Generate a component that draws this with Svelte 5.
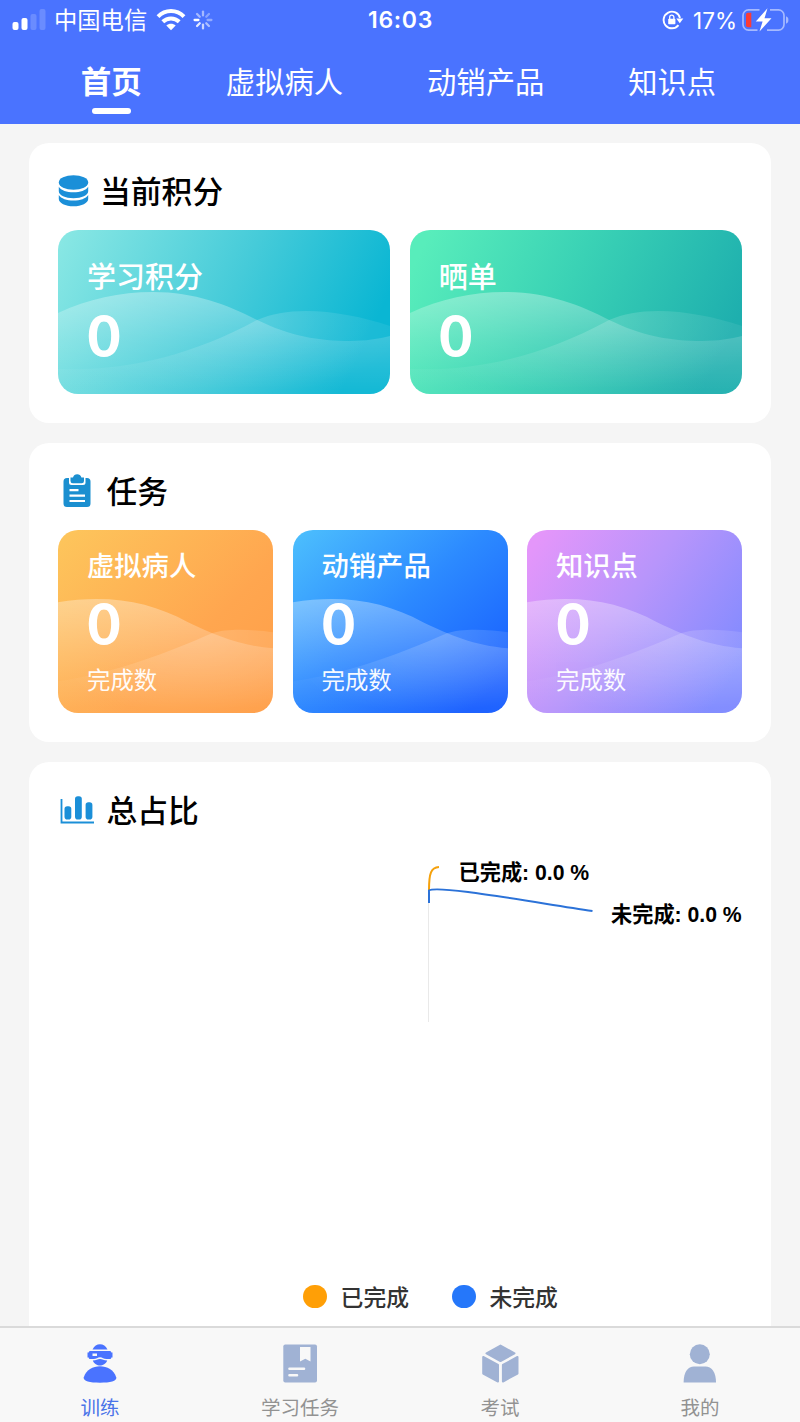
<script>
  const tabs = ['首页', '虚拟病人', '动销产品', '知识点'];
  const points = [
    { label: '学习积分', value: 0, tone: 'teal' },
    { label: '晒单', value: 0, tone: 'green' }
  ];
  const tasks = [
    { label: '虚拟病人', value: 0, tone: 'orange' },
    { label: '动销产品', value: 0, tone: 'blue' },
    { label: '知识点', value: 0, tone: 'purple' }
  ];
  const spokes = [0, 1, 2, 3, 4, 5, 6, 7];
  const spokeOpacity = [0.5, 0.35, 0.4, 0.55, 0.7, 0.85, 1, 0.5];
</script>

<div class="app">
  <header>
    <div class="status">
      <div class="side">
        <svg class="signal" width="34" height="22" viewBox="0 0 34 22">
          <rect x="0.5" y="13" width="6" height="8" rx="2" fill="#fff" />
          <rect x="9.5" y="9" width="6" height="12" rx="2" fill="#fff" />
          <rect x="18.5" y="5" width="6" height="16" rx="2" fill="#fff" opacity=".18" />
          <rect x="27.5" y="0" width="6" height="21" rx="2" fill="#fff" opacity=".18" />
        </svg>
        <span class="carrier">中国电信</span>
        <svg class="wifi" width="30" height="22" viewBox="0 0 30 22">
          <g fill="none" stroke="#fff" stroke-width="4">
            <path d="M2 7.600C9.300.2 20.700.2 28 7.600" />
            <path d="M6.800 12.800c4.600-4.500 11.800-4.500 16.400 0" />
          </g>
          <path d="M10.300 16.500c2.700-2.400 6.700-2.400 9.400 0L15 21.300z" fill="#fff" />
        </svg>
        <svg class="spinner" width="20" height="20" viewBox="-10 -10 20 20">
          {#each spokes as s}
            <line x1="0" y1="-4.600" x2="0" y2="-8.400" stroke="#fff" stroke-width="2.300" stroke-linecap="round" opacity={spokeOpacity[s]} transform="rotate({s * 45})" />
          {/each}
        </svg>
      </div>
      <span class="time">16:03</span>
      <div class="side right">
        <svg width="22" height="20" viewBox="0 0 22 20">
          <path d="M16.500 15.100A8.300 8.300 0 1 1 18 8" fill="none" stroke="#fff" stroke-width="1.900" />
          <path d="M14.300 8.500h7L17.800 13.300z" fill="#fff" />
          <rect x="6.200" y="8.800" width="7.200" height="5.400" rx=".8" fill="#fff" />
          <path d="M7.700 9V7.300a2.100 2.100 0 0 1 4.200 0V9" fill="none" stroke="#fff" stroke-width="1.300" />
        </svg>
        <span class="percent">17%</span>
        <svg width="48" height="24" viewBox="0 0 48 24">
          <path d="M18.500 1.900H7.500A5.500 5.500 0 0 0 2 7.400v9.200a5.500 5.500 0 0 0 5.500 5.500h9M29 1.900h8.500A5.500 5.500 0 0 1 43 7.400v9.200a5.500 5.500 0 0 1-5.500 5.500H26" fill="none" stroke="#fff" stroke-opacity=".5" stroke-width="1.700" />
          <path d="M7 4.800h3.300v14.400H7A2 2 0 0 1 5 17.200V6.800a2 2 0 0 1 2-2z" fill="#fb3b36" />
          <path d="M26.500.3 14.800 13.500h6.800L18.500 23.600 30.500 10.200h-7z" fill="#fff" />
          <path d="M45 8.200c2 .9 2.400 2 2.400 3.800s-.5 2.900-2.400 3.800z" fill="#fff" opacity=".5" />
        </svg>
      </div>
    </div>
    <nav>
      {#each tabs as tab, i}
        <span class="tab" class:active={i === 0}>{tab}</span>
      {/each}
    </nav>
  </header>

  <main>
    <section class="card">
      <h2 class="points-title">
        <svg width="31" height="34" viewBox="0 0 31 34" fill="#1b8fd8">
          <ellipse cx="15.500" cy="8.500" rx="14.700" ry="7.300" />
          <path d="M.8 12.700c2.200 3.700 8 5.500 14.700 5.500s12.500-1.800 14.700-5.500v4.500c0 4-6.600 7-14.700 7S.8 21.200.8 17.200z" />
          <path d="M.8 21c2.200 3.700 8 5.500 14.700 5.500s12.500-1.800 14.700-5.500v3.900c0 4-6.600 7.300-14.700 7.300S.8 28.900.8 24.900z" />
        </svg>
        <span>当前积分</span>
      </h2>
      <div class="row">
        {#each points as item}
          <div class="tile large {item.tone}">
            <svg class="wave" viewBox="0 0 332 164" preserveAspectRatio="none">
              <defs>
                <linearGradient id="w-{item.tone}" x1="0" y1="60" x2="0" y2="160" gradientUnits="userSpaceOnUse">
                  <stop offset="0" stop-color="#fff" stop-opacity=".33" />
                  <stop offset=".5" stop-color="#fff" stop-opacity=".14" />
                  <stop offset="1" stop-color="#fff" stop-opacity="0" />
                </linearGradient>
                <radialGradient id="v-{item.tone}" cx="0" cy="0" r="1" gradientUnits="userSpaceOnUse" gradientTransform="translate(170 90) scale(190 74)">
                  <stop offset="0" stop-color="#fff" stop-opacity=".19" />
                  <stop offset=".55" stop-color="#fff" stop-opacity=".1" />
                  <stop offset="1" stop-color="#fff" stop-opacity=".045" />
                </radialGradient>
              </defs>
              <path d="M0 83C30 69 62 62 95 62C137 62 170 75 199 90C232 106 260 111 292 111C307 111 321 109 332 106V164H0z" fill="url(#w-{item.tone})" />
              <path d="M0 139C65 142 133 126 199 90C233 74 288 81 332 96V164H0z" fill="url(#v-{item.tone})" />
            </svg>
            <span class="label">{item.label}</span>
            <strong>{item.value}</strong>
          </div>
        {/each}
      </div>
    </section>

    <section class="card second">
      <h2>
        <svg width="38" height="36" viewBox="0 0 38 36">
          <path d="M8.500 5h20.500a3.500 3.500 0 0 1 3.500 3.500v22a3.500 3.500 0 0 1-3.500 3.500H9A3.500 3.500 0 0 1 5.500 30.500v-22A3.500 3.500 0 0 1 9 5z" fill="#1b8fd0" />
          <path d="M11 3h16.500v6.500a2.500 2.500 0 0 1-2.500 2.500H13.500a2.500 2.500 0 0 1-2.500-2.500z" fill="#fff" />
          <path d="M12.500 4.500h2.500q1-3.200 4.200-3.200t4.200 3.200h2.600V8a2.300 2.300 0 0 1-2.300 2.300h-8.900A2.300 2.300 0 0 1 12.500 8z" fill="#1b8fd0" />
          <path d="M11.500 17.200h9M11.500 22.600h15.500M11.500 28h15.500" stroke="#fff" stroke-width="2.200" />
        </svg>
        <span>任务</span>
      </h2>
      <div class="row">
        {#each tasks as item}
          <div class="tile small {item.tone}">
            <svg class="wave" viewBox="0 0 215 183" preserveAspectRatio="none">
              <defs>
                <linearGradient id="w-{item.tone}" x1="0" y1="68" x2="0" y2="178" gradientUnits="userSpaceOnUse">
                  <stop offset="0" stop-color="#fff" stop-opacity=".33" />
                  <stop offset=".5" stop-color="#fff" stop-opacity=".15" />
                  <stop offset="1" stop-color="#fff" stop-opacity="0" />
                </linearGradient>
                <radialGradient id="v-{item.tone}" cx="0" cy="0" r="1" gradientUnits="userSpaceOnUse" gradientTransform="translate(135 105) scale(150 78)">
                  <stop offset="0" stop-color="#fff" stop-opacity=".18" />
                  <stop offset=".55" stop-color="#fff" stop-opacity=".1" />
                  <stop offset="1" stop-color="#fff" stop-opacity=".03" />
                </radialGradient>
              </defs>
              <path d="M0 72C50 64 92 71 130 92C158 105 180 115 215 118V183H0z" fill="url(#w-{item.tone})" />
              <path d="M0 151C60 142 110 122 154 103C168 98 195 99 215 102V183H0z" fill="url(#v-{item.tone})" />
            </svg>
            <span class="label">{item.label}</span>
            <strong>{item.value}</strong>
            <span class="note">完成数</span>
          </div>
        {/each}
      </div>
    </section>

    <section class="card ratio">
      <h2>
        <svg width="38" height="36" viewBox="0 0 38 36">
          <path d="M3.500 7v23.500H36" fill="none" stroke="#1b8fd8" stroke-width="1.800" />
          <g fill="#1b8fd8">
            <rect x="6.500" y="14.300" width="6.800" height="13.300" rx="2.800" />
            <rect x="17" y="4.300" width="6.800" height="23.300" rx="2.800" />
            <rect x="27.600" y="10.300" width="6.800" height="17.300" rx="2.800" />
          </g>
        </svg>
        <span>总占比</span>
      </h2>
      <svg class="chart" width="700" height="424" viewBox="58 848 700 424">
        <path d="M428.500 903V1022" stroke="#e9e9e9" stroke-width="1" />
        <path d="M429 890C429 873 431 867.500 439 867" fill="none" stroke="#f5a10c" stroke-width="2" />
        <path d="M429 903V890.500C437 885 520 900 592.500 911" fill="none" stroke="#2b72d8" stroke-width="2" />
        <text x="458.500" y="879.500">已完成: 0.0 %</text>
        <text x="611" y="921.500">未完成: 0.0 %</text>
      </svg>
      <div class="legend">
        <span><i class="done"></i>已完成</span>
        <span><i class="todo"></i>未完成</span>
      </div>
    </section>
  </main>

  <footer>
    <div class="item current">
      <svg width="40" height="40" viewBox="0 0 40 40" fill="#4a73ff">
        <path d="M12.500 6.500C14 3 17 1.300 20 1.300S26 3 27.500 6.500z" />
        <path fill-rule="evenodd" d="M10 8h20q1.300 0 1.300 1.500h1.200v5h-1.200Q31.300 16 30 16h-3.500c-3 0-4-1.800-6.500-1.800S16.500 16 13.500 16H10q-1.300 0-1.300-1.500H7.500v-5h1.200Q8.700 8 10 8zM12.500 10.500v2.400H17v-2.400z" />
        <path d="M12.800 17.500c3.500 0 4.700-1.500 7.200-1.500s3.700 1.500 7.200 1.500c-1.200 3.500-4.500 5-7.200 5s-6-1.500-7.200-5z" />
        <path d="M3.700 34.500C6 27 13 23.300 20 23.300s14 3.700 16.300 11.200c.6 3.500-6 5.200-16.300 5.200S3.100 38 3.700 34.500z" />
      </svg>
      <span>训练</span>
    </div>
    <div class="item">
      <svg width="40" height="40" viewBox="0 0 40 40">
        <rect x="3.300" y="1.500" width="33.700" height="38" rx="2" fill="#a0b2d4" />
        <path d="M20 4h10.500v14.500l-5.200-2.700-5.300 2.700z" fill="#f8f8f8" />
        <path d="M9.500 25.700H24M9.500 32.300h7.500" stroke="#f8f8f8" stroke-width="2.600" stroke-linecap="round" />
      </svg>
      <span>学习任务</span>
    </div>
    <div class="item">
      <svg width="40" height="40" viewBox="0 0 40 40" fill="#a0b2d4" stroke="#a0b2d4" stroke-width="2" stroke-linejoin="round">
        <path d="M20.500 2.500 34.500 10.300 20.500 18 6.500 10.300z" />
        <path d="M3.200 14 18 22V38.500L3.200 30.500z" />
        <path d="M37.500 14 22.900 22V38.500L37.500 30.500z" />
      </svg>
      <span>考试</span>
    </div>
    <div class="item">
      <svg width="40" height="40" viewBox="0 0 40 40" fill="#a0b2d4">
        <circle cx="19.800" cy="11.300" r="10" />
        <path d="M3.600 39.500C3.600 29 8 23.500 14 23.500h11.500c6 0 10.500 5.500 10.500 16z" />
      </svg>
      <span>我的</span>
    </div>
  </footer>
</div>

<style>
  .app {
    width: 800px;
    height: 1422px;
    display: flex;
    flex-direction: column;
    overflow: hidden;
    background: #f5f5f5;
    color: #000;
    font-family: Inter, 'Noto Sans CJK SC', sans-serif;
  }
  svg { display: block; flex: none; }
  header {
    flex: none;
    height: 123.5px;
    background: #4a73ff;
    color: #fff;
  }
  .status {
    display: grid;
    grid-template-columns: 1fr auto 1fr;
    align-items: center;
    height: 40px;
    padding: 0 11px 0 12px;
  }
  .side { display: flex; align-items: center; }
  .right { justify-content: flex-end; }
  .signal { margin-right: 8px; }
  .carrier { font: 400 23.3px/38px 'Noto Sans CJK SC', sans-serif; padding-bottom: 2px; }
  .wifi { margin: 0 7px 0 9px; }
  .time { font-size: 23px; font-weight: 600; letter-spacing: .7px; }
  .percent { margin: 0 4px 0 9px; font-size: 22.5px; }
  nav {
    display: flex;
    justify-content: center;
    gap: 84px;
    height: 83px;
    padding-right: 3px;
  }
  .tab {
    display: flex;
    flex-direction: column;
    align-items: center;
    font: 400 29.3px/80px 'Noto Sans CJK SC', sans-serif;
    white-space: nowrap;
  }
  .active { font-weight: 700; font-size: 30.5px; }
  .active::after {
    content: '';
    width: 39px;
    height: 6px;
    margin-top: -12px;
    border-radius: 3px;
    background: #fff;
  }
  main {
    flex: 1;
    min-height: 0;
    display: flex;
    flex-direction: column;
    gap: 19.5px;
    padding: 19.5px 29px 0;
  }
  .card {
    flex: none;
    height: 280px;
    box-sizing: border-box;
    padding: 29px;
    border-radius: 20px;
    background: #fff;
  }
  .second { height: 299.5px; }
  .ratio {
    flex: 1;
    min-height: 0;
    padding-bottom: 0;
    border-radius: 20px 20px 0 0;
    display: flex;
    flex-direction: column;
  }
  h2 {
    display: flex;
    align-items: center;
    gap: 10.5px;
    height: 38px;
    margin: 0 0 20px;
    font: 500 30.8px/36px 'Noto Sans CJK SC', sans-serif;
  }
  h2 span { padding-bottom: 2px; }
  .points-title { gap: 11px; }
  .row { display: flex; gap: 19.5px; }
  .tile {
    position: relative;
    flex: 1;
    display: flex;
    flex-direction: column;
    box-sizing: border-box;
    padding-left: 29px;
    border-radius: 20px;
    overflow: hidden;
    color: #fff;
  }
  .large { height: 164px; padding-top: 25px; }
  .small { height: 183.500px; padding-top: 15px; }
  .wave { position: absolute; left: 0; top: 0; width: 100%; height: 100%; }
  .label, strong, .note { position: relative; }
  .label { font: 500 29px/40px 'Noto Sans CJK SC', sans-serif; }
  .small .label { font-size: 27.300px; line-height: 38px; }
  strong { font: 900 57px/60px Lato, sans-serif; margin: 10px 0 0 .5px; }
  .note { margin-top: 10px; font: 400 23.400px/32px 'Noto Sans CJK SC', sans-serif; opacity: .95; }
  .teal { background: linear-gradient(116deg, #8be8e4 0%, #45cbd9 50%, #0ab6d3 88%); }
  .green { background: linear-gradient(116deg, #58edbb 5%, #3ad2b5 45%, #1eafae 90%); }
  .orange { background: linear-gradient(135deg, #fdc65c, #ffa64f 62%, #ff9e48); }
  .blue { background: linear-gradient(140deg, #4dc0fd, #2c8aff 45%, #185eff 90%); }
  .purple { background: linear-gradient(125deg, #e496fa 5%, #b795fb 45%, #7f8aff 90%); }
  .chart { margin-top: -1px; }
  .chart text { font: 700 21.200px 'Liberation Sans', 'Noto Sans CJK SC', sans-serif; }
  .legend {
    display: flex;
    justify-content: center;
    gap: 43px;
    padding-left: 61px;
    margin-top: 5px;
    color: #333;
    font: 500 22.800px/40px 'Noto Sans CJK SC', sans-serif;
  }
  .legend span { display: flex; align-items: center; gap: 14px; }
  .legend i { width: 23.500px; height: 23.500px; border-radius: 50%; }
  .done { background: #ff9f06; }
  .todo { background: #2577fa; }
  footer {
    flex: none;
    height: 96px;
    box-sizing: border-box;
    display: flex;
    border-top: 2px solid #dadada;
    background: #f8f8f8;
  }
  .item {
    flex: 1;
    display: flex;
    flex-direction: column;
    align-items: center;
    padding-top: 15px;
    color: #929292;
    font: 400 19.500px/28px 'Noto Sans CJK SC', sans-serif;
  }
  .item span { margin-top: 10px; }
  .current { color: #4a73e8; }
</style>
